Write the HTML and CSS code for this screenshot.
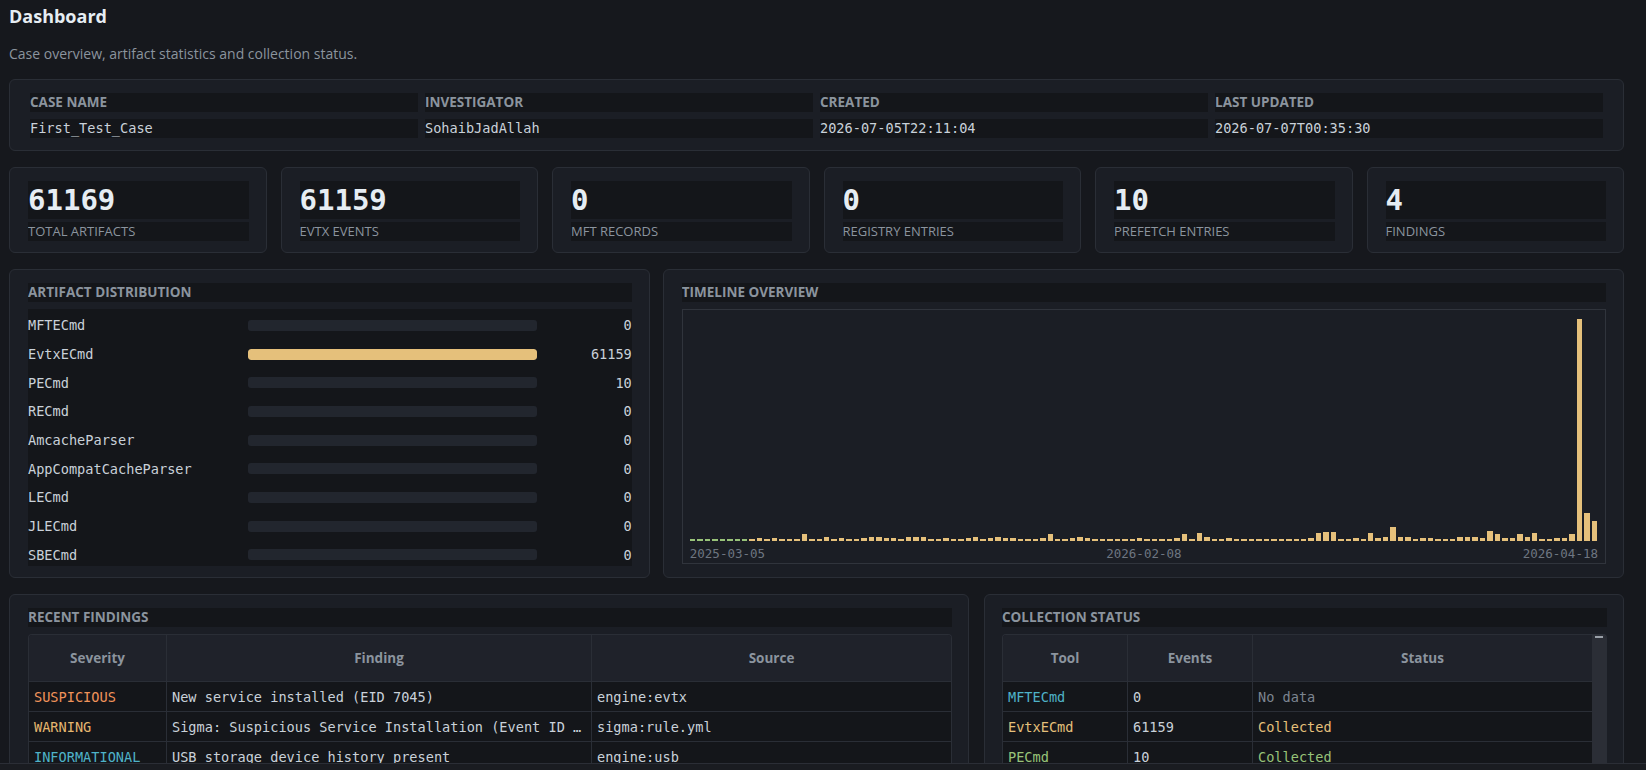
FILE: index.html
```html
<!DOCTYPE html>
<html lang="en">
<head>
    <meta charset="UTF-8">
    <meta name="viewport" content="width=device-width, initial-scale=1.0">
    <title>Dashboard</title>
    <link rel="stylesheet" href="styles.css">
</head>
<body>

<main class="page">
    <h1 class="page-title">Dashboard</h1>
    <p class="page-sub">Case overview, artifact statistics and collection status.</p>

    <section class="panel case-info">
        <div class="case-grid">
            <div class="cell label">Case Name</div>
            <div class="cell label">Investigator</div>
            <div class="cell label">Created</div>
            <div class="cell label">Last Updated</div>
            <div class="cell value">First_Test_Case</div>
            <div class="cell value">SohaibJadAllah</div>
            <div class="cell value">2026-07-05T22:11:04</div>
            <div class="cell value">2026-07-07T00:35:30</div>
        </div>
    </section>

    <section class="stats">
        <div class="panel stat">
            <div class="cell stat-num">61169</div>
            <div class="cell stat-label">Total Artifacts</div>
        </div>
        <div class="panel stat">
            <div class="cell stat-num">61159</div>
            <div class="cell stat-label">EVTX Events</div>
        </div>
        <div class="panel stat">
            <div class="cell stat-num">0</div>
            <div class="cell stat-label">MFT Records</div>
        </div>
        <div class="panel stat">
            <div class="cell stat-num">0</div>
            <div class="cell stat-label">Registry Entries</div>
        </div>
        <div class="panel stat">
            <div class="cell stat-num">10</div>
            <div class="cell stat-label">Prefetch Entries</div>
        </div>
        <div class="panel stat">
            <div class="cell stat-num">4</div>
            <div class="cell stat-label">Findings</div>
        </div>
    </section>

    <div class="row row-mid">
        <section class="panel block">
            <div class="cell label panel-title">Artifact Distribution</div>
            <div class="dist-list" id="dist-list"></div>
        </section>

        <section class="panel block">
            <div class="cell label panel-title">Timeline Overview</div>
            <div class="chart">
                <div class="bars" id="bars"></div>
                <div class="axis">
                    <span>2025-03-05</span>
                    <span>2026-02-08</span>
                    <span>2026-04-18</span>
                </div>
            </div>
        </section>
    </div>

    <div class="row row-bottom">
        <section class="panel block findings">
            <div class="cell label panel-title">Recent Findings</div>
            <div class="table-wrap">
                <table class="grid-table">
                    <colgroup>
                        <col style="width: 138px">
                        <col style="width: 425px">
                        <col>
                    </colgroup>
                    <thead>
                        <tr><th>Severity</th><th>Finding</th><th>Source</th></tr>
                    </thead>
                    <tbody>
                        <tr>
                            <td class="sev-suspicious">SUSPICIOUS</td>
                            <td>New service installed (EID 7045)</td>
                            <td>engine:evtx</td>
                        </tr>
                        <tr>
                            <td class="sev-warning">WARNING</td>
                            <td title="Sigma: Suspicious Service Installation (Event ID 7045)">Sigma: Suspicious Service Installation (Event ID …</td>
                            <td>sigma:rule.yml</td>
                        </tr>
                        <tr>
                            <td class="sev-info">INFORMATIONAL</td>
                            <td>USB storage device history present</td>
                            <td>engine:usb</td>
                        </tr>
                    </tbody>
                </table>
            </div>
        </section>

        <section class="panel block collection">
            <div class="cell label panel-title">Collection Status</div>
            <div class="table-wrap with-scroll">
                <table class="grid-table">
                    <colgroup>
                        <col style="width: 125px">
                        <col style="width: 125px">
                        <col>
                    </colgroup>
                    <thead>
                        <tr><th>Tool</th><th>Events</th><th>Status</th></tr>
                    </thead>
                    <tbody>
                        <tr>
                            <td class="tool-cyan">MFTECmd</td>
                            <td>0</td>
                            <td class="muted">No data</td>
                        </tr>
                        <tr>
                            <td class="tool-yellow">EvtxECmd</td>
                            <td>61159</td>
                            <td class="tool-yellow">Collected</td>
                        </tr>
                        <tr>
                            <td class="tool-green">PECmd</td>
                            <td>10</td>
                            <td class="tool-green">Collected</td>
                        </tr>
                    </tbody>
                </table>
                <div class="vscroll"><span class="vscroll-cap"></span></div>
            </div>
        </section>
    </div>
</main>

<div class="hscroll"></div>

<script>
    // artifact counts per parser
    const tools = [
        ["MFTECmd", 0], ["EvtxECmd", 61159], ["PECmd", 10], ["RECmd", 0],
        ["AmcacheParser", 0], ["AppCompatCacheParser", 0], ["LECmd", 0],
        ["JLECmd", 0], ["SBECmd", 0]
    ];
    const maxCount = Math.max(...tools.map(t => t[1]));
    const list = document.getElementById("dist-list");
    tools.forEach(([name, count]) => {
        const row = document.createElement("div");
        row.className = "dist-row";
        row.innerHTML = `
            <span class="dist-name">${name}</span>
            <div class="track"><div class="fill" style="width: ${count / maxCount * 100}%"></div></div>
            <span class="dist-val">${count}</span>
        `;
        list.appendChild(row);
    });

    // events per day (pixel heights of the chart)
    const days = [
        2,2,2,2,2,2,2,2,
        2,3,2,3,2,2,2,7,2,2,4,2,3,2,2,3,4,4,3,3,2,4,4,4,2,2,3,2,2,3,4,2,3,4,
        3,3,2,2,2,3,7,2,2,3,4,3,2,2,2,2,2,2,3,2,2,2,2,3,7,2,8,4,2,2,3,2,2,2,2,2,2,2,2,2,2,3,8,
        9,9,2,2,3,2,8,3,4,14,4,4,2,3,3,2,2,2,4,4,4,3,10,7,3,3,7,4,8,2,2,3,3,7,222,28,20
    ];
    const bars = document.getElementById("bars");
    days.forEach((h, i) => {
        const bar = document.createElement("div");
        bar.className = i < 8 ? "bar early" : "bar";
        bar.style.height = h + "px";
        bars.appendChild(bar);
    });
</script>

</body>
</html>
```

FILE: styles.css
```css
* {
    box-sizing: border-box;
}
html, body {
    height: 100%;
}
body {
    margin: 0;
    background-color: #16181d;
    color: #c9d1d9;
    font-family: "Open Sans", "Noto Sans", sans-serif;
    overflow: hidden;
}
.page {
    padding: 4px 22px 0 9px;
}
.page-title {
    margin: 0;
    font-size: 18px;
    line-height: 24px;
    font-weight: 700;
    color: #e6edf3;
}
.page-sub {
    margin: 16px 0 15px;
    font-size: 14px;
    line-height: 20px;
    color: #8b949e;
}
.panel {
    background-color: #1b1e25;
    border: 1px solid #2a2e36;
    border-radius: 6px;
}
.cell {
    background-color: #14161a;
    line-height: 19px;
    white-space: nowrap;
    overflow: hidden;
}
.label {
    font-size: 13.5px;
    font-weight: 700;
    color: #8b949e;
    text-transform: uppercase;
}
.value {
    font-family: "DejaVu Sans Mono", monospace;
    font-size: 13.6px;
    color: #c9d1d9;
}

/* case info */
.case-info {
    padding: 13px 20px 12px;
}
.case-grid {
    display: grid;
    grid-template-columns: repeat(4, 1fr);
    gap: 7px;
}

/* stat cards */
.stats {
    display: grid;
    grid-template-columns: repeat(6, 1fr);
    gap: 14px;
    margin-top: 16px;
}
.stat {
    padding: 13px 17px 11px 18px;
}
.stat-num {
    font-family: "DejaVu Sans Mono", monospace;
    font-size: 29px;
    font-weight: 700;
    line-height: 38px;
    color: #e6edf3;
}
.stat-label {
    margin-top: 3px;
    font-size: 13px;
    color: #8b949e;
    text-transform: uppercase;
}

/* rows */
.row {
    display: grid;
    margin-top: 16px;
}
.row-mid {
    grid-template-columns: 2fr 3fr;
    gap: 13px;
}
.row-bottom {
    grid-template-columns: 3fr 2fr;
    gap: 15px;
}
.block {
    padding: 13px 17px 11px 18px;
}
.collection {
    padding-left: 17px;
    padding-right: 16px;
}
.findings {
    padding-right: 16px;
}
.panel-title {
    margin-bottom: 7px;
}

/* distribution */
.dist-list {
    background-color: #14161a;
    padding-top: 2px;
    height: 257px;
    overflow: hidden;
    font-family: "DejaVu Sans Mono", monospace;
    font-size: 13.6px;
    color: #c9d1d9;
}
.dist-row {
    display: grid;
    grid-template-columns: 220px 1fr 95px;
    align-items: center;
    height: 28.7px;
}
.track {
    height: 11px;
    background-color: #22262e;
    border-radius: 3px;
    overflow: hidden;
}
.fill {
    height: 100%;
    background-color: #e5c07b;
    border-radius: 3px;
}
.dist-val {
    text-align: right;
}

/* timeline */
.chart {
    border: 1px solid #30343c;
    padding: 9px 7px 1px;
}
.bars {
    height: 222px;
    display: flex;
    align-items: flex-end;
    gap: 2px;
}
.bar {
    flex: 1;
    background-color: #e5c07b;
}
.bar.early {
    background-color: #98c379;
}
.axis {
    display: flex;
    justify-content: space-between;
    margin-top: 5px;
    font-family: "DejaVu Sans Mono", monospace;
    font-size: 12.5px;
    line-height: 16px;
    color: #6e7681;
}

/* tables */
.table-wrap {
    border: 1px solid #2a2e36;
    border-bottom: none;
    border-radius: 4px 4px 0 0;
    overflow: hidden;
}
.with-scroll {
    display: flex;
}
.grid-table {
    width: 100%;
    border-collapse: separate;
    border-spacing: 0;
    table-layout: fixed;
}
.grid-table th {
    height: 47px;
    padding: 0 4px;
    background-color: #1f222a;
    border-right: 1px solid #2a2e36;
    border-bottom: 1px solid #2a2e36;
    font-size: 13.5px;
    font-weight: 700;
    color: #8b949e;
    text-align: center;
}
.grid-table td {
    height: 30px;
    padding: 0 2px 0 5px;
    background-color: #14161a;
    border-right: 1px solid #2a2e36;
    border-bottom: 1px solid #2a2e36;
    font-family: "DejaVu Sans Mono", monospace;
    font-size: 13.6px;
    color: #c9d1d9;
    white-space: nowrap;
    overflow: hidden;
}
.grid-table th:last-child,
.grid-table td:last-child {
    border-right: none;
}
.sev-suspicious {
    color: #f0935a !important;
}
.sev-warning {
    color: #e5b66f !important;
}
.sev-info,
.tool-cyan {
    color: #4fb3c8 !important;
}
.tool-yellow {
    color: #e5c07b !important;
}
.tool-green {
    color: #98c379 !important;
}
.muted {
    color: #7d8590 !important;
}
.vscroll {
    position: relative;
    flex: 0 0 14px;
    background-color: #2b2e36;
}
.vscroll-cap {
    position: absolute;
    top: 1px;
    left: 3px;
    width: 8px;
    height: 2px;
    background-color: #9aa0a8;
}

/* page scrollbar strip */
.hscroll {
    position: fixed;
    left: 0;
    right: 0;
    bottom: 0;
    height: 7px;
    background-color: #1a1c21;
    border-top: 1px solid #2b2e36;
}
```
